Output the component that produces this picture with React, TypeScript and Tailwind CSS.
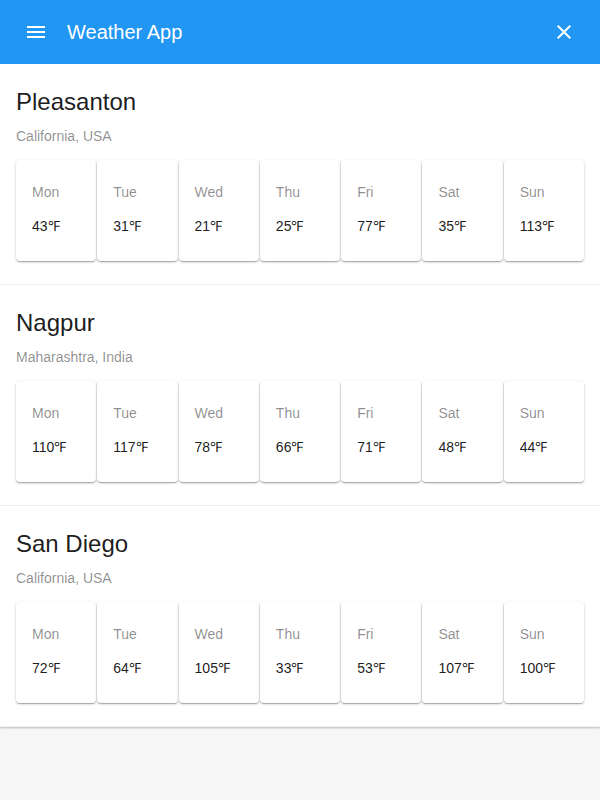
import React from "react";

type City = { name: string; region: string; temps: number[] };

const DAYS = ["Mon", "Tue", "Wed", "Thu", "Fri", "Sat", "Sun"];

const CITIES: City[] = [
  { name: "Pleasanton", region: "California, USA", temps: [43, 31, 21, 25, 77, 35, 113] },
  { name: "Nagpur", region: "Maharashtra, India", temps: [110, 117, 78, 66, 71, 48, 44] },
  { name: "San Diego", region: "California, USA", temps: [72, 64, 105, 33, 53, 107, 100] },
];

function MenuIcon() {
  return (
    <svg width="24" height="24" viewBox="0 0 24 24" fill="white">
      <path d="M3 18h18v-2H3v2zm0-5h18v-2H3v2zm0-7v2h18V6H3z" />
    </svg>
  );
}

function CloseIcon() {
  return (
    <svg width="24" height="24" viewBox="0 0 24 24" fill="white">
      <path d="M19 6.41L17.59 5 12 10.59 6.41 5 5 6.41 10.59 12 5 17.59 6.41 19 12 13.41 17.59 19 19 17.59 13.41 12z" />
    </svg>
  );
}

function CityCard({ city }: { city: City }) {
  return (
    <div className="relative bg-white h-[221px] px-4 pt-[22px] border-b border-[#f2f2f2] shadow-[0_1px_2px_0_rgba(0,0,0,0.25)]">
      <div className="text-[24px] leading-8 text-[rgba(0,0,0,0.9)]">{city.name}</div>
      <div className="mt-[8px] text-[14px] leading-5 text-[rgba(0,0,0,0.45)]">{city.region}</div>
      <div className="mt-[14px] grid grid-cols-7 gap-px">
        {DAYS.map((d, i) => (
          <div
            key={d}
            className="h-[101px] bg-white rounded pl-4 pt-6 shadow-[0_1px_3px_0_rgba(0,0,0,0.2),0_1px_1px_0_rgba(0,0,0,0.14),0_2px_1px_-1px_rgba(0,0,0,0.12)]"
          >
            <div className="text-[14px] leading-4 text-[rgba(0,0,0,0.45)]">{d}</div>
            <div className="mt-4 text-[14px] leading-5 text-[rgba(0,0,0,0.9)]">{city.temps[i]}℉</div>
          </div>
        ))}
      </div>
    </div>
  );
}

export default function App() {
  return (
    <div
      className="min-h-[800px] bg-[#f7f7f7]"
      style={{ fontFamily: '"Liberation Sans", Arial, sans-serif' }}
    >
      <header className="relative z-10 h-16 bg-[#2196f3] flex items-center pl-6 pr-6">
        <MenuIcon />
        <div className="ml-[19px] text-white text-[20px] font-medium">Weather App</div>
        <div className="ml-auto">
          <CloseIcon />
        </div>
      </header>
      {CITIES.map((c) => (
        <CityCard key={c.name} city={c} />
      ))}
    </div>
  );
}
